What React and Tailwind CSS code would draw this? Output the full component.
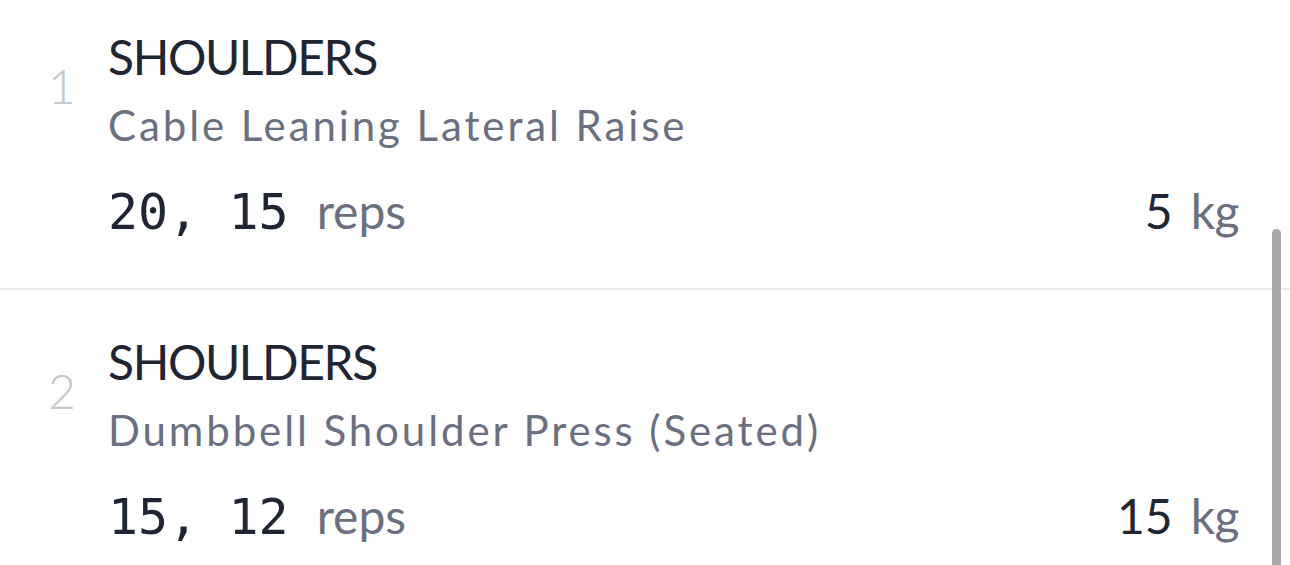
const exercises = [
  { id: 1, group: "SHOULDERS", name: "Cable Leaning Lateral Raise", reps: "20, 15", weight: 5 },
  { id: 2, group: "SHOULDERS", name: "Dumbbell Shoulder Press (Seated)", reps: "15, 12", weight: 15 },
];

function ExerciseRow({ item }) {
  return (
    <div className="flex pl-12 border-b-2 border-[#e8e8ea]">
      {/* index */}
      <div className="w-[60px] shrink-0 pt-[72px] text-[48px] leading-[58px] font-light text-[#c4c6cc]">
        {item.id}
      </div>

      <div className="flex-1 pt-[43px] pb-[46px] pr-[51px]">
        <div className="text-[48px] leading-[58px] tracking-[-1.4px] text-[#1f2533]">{item.group}</div>
        <div className="mt-[11px] text-[42px] leading-[56px] tracking-[2.9px] text-[#6b7080]">{item.name}</div>
        <div className="mt-[28px] flex items-baseline justify-between leading-[60px]">
          <div className="flex items-baseline">
            <span className="text-[50px] text-[#1f2533] [font-family:'DejaVu_Sans_Mono',monospace]">
              {item.reps}
            </span>
            <span className="ml-[28px] text-[48px] text-[#6b7080]">reps</span>
          </div>
          <div className="flex items-baseline">
            <span className="text-[48px] text-[#1f2533]">{item.weight}</span>
            <span className="ml-[18px] text-[48px] tracking-[-0.5px] text-[#6b7080]">kg</span>
          </div>
        </div>
      </div>
    </div>
  );
}

export default function App() {
  return (
    <div className="relative h-[565px] w-full overflow-hidden bg-white [font-family:Lato,'Liberation_Sans',sans-serif]">
      <div className="-mt-[15px]">
        {exercises.map((ex) => (
          <ExerciseRow key={ex.id} item={ex} />
        ))}
      </div>
      {/* overlay scrollbar */}
      <div className="absolute right-[9px] top-[229px] -bottom-4 w-[9px] rounded-full bg-[#a9a9a9]" />
    </div>
  );
}
